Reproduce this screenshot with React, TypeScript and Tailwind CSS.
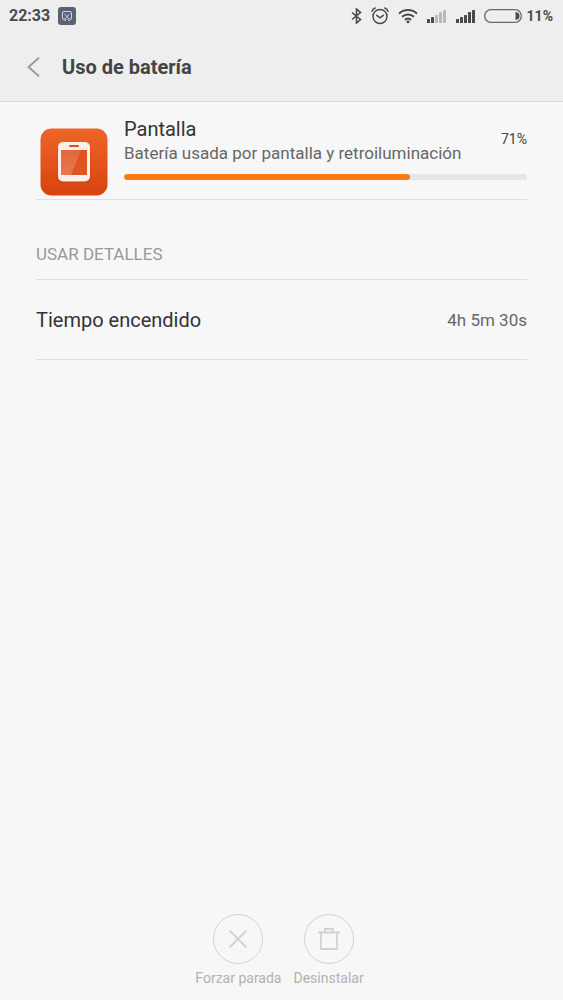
import type { ReactNode } from 'react';

const StatusBar = () => (
  <div className="flex h-8 items-center justify-between pl-[9px] pr-[10px] text-[#4a4a4a]">
    <div className="flex items-center gap-2">
      <span className="text-base font-bold">22:33</span>
      <svg className="h-[18px] w-[18px]" viewBox="0 0 18 18" fill="none">
        <rect width="18" height="18" rx="3" fill="#596078" />
        <path
          d="M5.800 12.500A1.300 1.300 0 0 1 4.500 11.200V6A1.500 1.500 0 0 1 6 4.500h6A1.500 1.500 0 0 1 13.500 6v5.200a1.300 1.300 0 0 1-1.300 1.300"
          stroke="#d5d8e2"
        />
        <path d="M6.500 6.800l4.300 5M11.500 6.800l-4.300 5" stroke="#d5d8e2" strokeWidth="0.9" />
        <circle cx="6.900" cy="12.600" r="1" stroke="#d5d8e2" strokeWidth="0.8" />
        <circle cx="11.100" cy="12.600" r="1" stroke="#d5d8e2" strokeWidth="0.8" />
      </svg>
    </div>
    <div className="flex items-center">
      {/* Bluetooth */}
      <svg className="mr-[9px] h-4 w-[11px]" viewBox="0 0 11 16" fill="none" stroke="currentColor" strokeWidth="1.600">
        <path d="M1 4.500l8.500 7L5.500 15V1l4 3.500-8.500 7" />
      </svg>
      {/* Alarm */}
      <svg className="mr-[9px] h-[18px] w-[18px]" viewBox="0 0 18 18" fill="none" stroke="currentColor" strokeWidth="1.500" strokeLinecap="round">
        <circle cx="9" cy="9.500" r="7" />
        <path d="M5.800 8.300L9 10.800l3.300-2.500M1 4.200C1.500 2.700 2.700 1.600 4.200 1M17 4.200c-.5-1.500-1.700-2.600-3.200-3.200" />
      </svg>
      {/* Wi-Fi */}
      <svg className="mr-2 h-4 w-5" viewBox="0 0 20 16" fill="none" stroke="currentColor" strokeWidth="2">
        <path d="M1 5.700C6 .9 14 .9 19 5.700M4 8.800c3.400-3.200 8.600-3.200 12 0M6.800 11.800c1.900-1.600 4.500-1.600 6.400 0" />
        <circle cx="10" cy="13.800" r="1.500" fill="currentColor" stroke="none" />
      </svg>
      <Signal level={2} />
      <Signal level={5} />
      {/* Battery */}
      <svg className="mr-[5px] h-4 w-[38px]" viewBox="0 0 38 16" fill="none">
        <rect x="0.700" y="1.700" width="36.600" height="12.600" rx="6" stroke="#6a6a6a" strokeWidth="1.300" />
        <path d="M31.500 4c3 .3 4 2 4 4s-1 3.700-4 4z" fill="#4a4a4a" />
      </svg>
      <span className="text-sm font-bold">11%</span>
    </div>
  </div>
);

const bars = [
  { x: 0, y: 10, h: 4 },
  { x: 4, y: 8, h: 6 },
  { x: 8, y: 6, h: 8 },
  { x: 12, y: 3, h: 11 },
  { x: 16, y: 1, h: 13 },
];

const Signal = ({ level }: { level: number }) => (
  <svg className="mr-2 h-[14px] w-[21px]" viewBox="0 0 21 14">
    {bars.map((bar, i) => (
      <rect key={bar.x} x={bar.x + 1} y={bar.y} width="3" height={bar.h} rx="0.500" fill={i < level ? '#4a4a4a' : '#b9b9b9'} />
    ))}
  </svg>
);

const ScreenIcon = () => (
  <svg className="h-[68px] w-[68px] shrink-0" viewBox="0 0 68 68">
    <defs>
      <linearGradient id="tile" x1="0" y1="0" x2="0" y2="1">
        <stop offset="0" stopColor="#ee6528" />
        <stop offset="1" stopColor="#d8430f" />
      </linearGradient>
      <linearGradient id="glass" x1="0" y1="0" x2="0" y2="1">
        <stop offset="0" stopColor="#e0683a" />
        <stop offset="1" stopColor="#e67a50" />
      </linearGradient>
    </defs>
    <rect x="0.500" y="0.500" width="67" height="67" rx="11" fill="url(#tile)" />
    <rect x="17.500" y="15.500" width="33" height="39" rx="5" fill="#b8380c" opacity="0.500" />
    <rect x="18" y="14" width="32" height="39.500" rx="5" fill="#fdeee6" />
    <rect x="29" y="17" width="10" height="2" rx="1" fill="#d9501e" />
    <rect x="21" y="22" width="26" height="25" fill="#df5423" />
    <path d="M21 22h20L31 47H21z" fill="url(#glass)" />
  </svg>
);

const ActionButton = ({ label, children }: { label: string; children: ReactNode }) => (
  <button type="button" disabled className="flex flex-col items-center gap-1 text-[#b2b2b2]">
    <span className="flex h-[50px] w-[50px] items-center justify-center rounded-full border border-[#d2d2d2] text-[#d2d2d2]">
      {children}
    </span>
    <span className="text-sm leading-5">{label}</span>
  </button>
);

const App = () => {
  const usage = 71;

  return (
    <div className="flex min-h-screen flex-col bg-[#f7f7f7] font-['Roboto',sans-serif]">
      <header className="border-b border-[#d8d8d8] bg-[#eeeeee]">
        <StatusBar />
        <div className="flex h-[69px] items-center gap-[22px] pl-[27px] pt-px">
          <button type="button" aria-label="Atrás" className="text-[#999999]">
            <svg className="h-5 w-[13px]" viewBox="0 0 13 20" fill="none" stroke="currentColor" strokeWidth="1.800">
              <path d="M12 .8L1.500 10 12 19.200" />
            </svg>
          </button>
          <h1 className="text-xl font-bold text-[#444444]">Uso de batería</h1>
        </div>
      </header>

      <main className="flex-1 px-9">
        <section className="flex h-[98px] items-end gap-4 border-b border-[#dedede] pb-[3px] pl-1">
          <ScreenIcon />
          <div className="flex-1 pb-4">
            <div className="flex items-start justify-between">
              <div>
                <h2 className="text-xl leading-6 text-[#333333]">Pantalla</h2>
                <p className="text-[17px] leading-6 text-[#666666]">Batería usada por pantalla y retroiluminación</p>
              </div>
              <span className="pt-3 text-sm leading-5 text-[#444444]">{usage}%</span>
            </div>
            <div className="mt-[9px] h-[6px] overflow-hidden rounded-full bg-[#e6e6e6]">
              <div className="h-full rounded-full bg-[#f97a0f]" style={{ width: `${usage}%` }} />
            </div>
          </div>
        </section>

        <section>
          <h2 className="flex h-20 items-end border-b border-[#dedede] pb-[13px] text-[17px] leading-6 text-[#999999]">USAR DETALLES</h2>
          <dl className="flex h-20 items-center justify-between border-b border-[#dedede]">
            <dt className="text-xl text-[#333333]">Tiempo encendido</dt>
            <dd className="text-[17px] leading-6 text-[#666666]">4h 5m 30s</dd>
          </dl>
        </section>
      </main>

      <footer className="flex justify-center gap-3 pb-3 pr-1">
        <ActionButton label="Forzar parada">
          <svg className="h-5 w-5" viewBox="0 0 20 20" fill="none" stroke="currentColor" strokeWidth="1.800">
            <path d="M1.500 1.500l17 17M18.500 1.500l-17 17" />
          </svg>
        </ActionButton>
        <ActionButton label="Desinstalar">
          <svg className="h-6 w-6" viewBox="0 0 24 24" fill="none" stroke="currentColor" strokeWidth="1.800">
            <path d="M1 5.500h22M4 5.500V22h16V5.500M8 5.500V2h8v3.500" />
          </svg>
        </ActionButton>
      </footer>
    </div>
  );
};

export default App;
